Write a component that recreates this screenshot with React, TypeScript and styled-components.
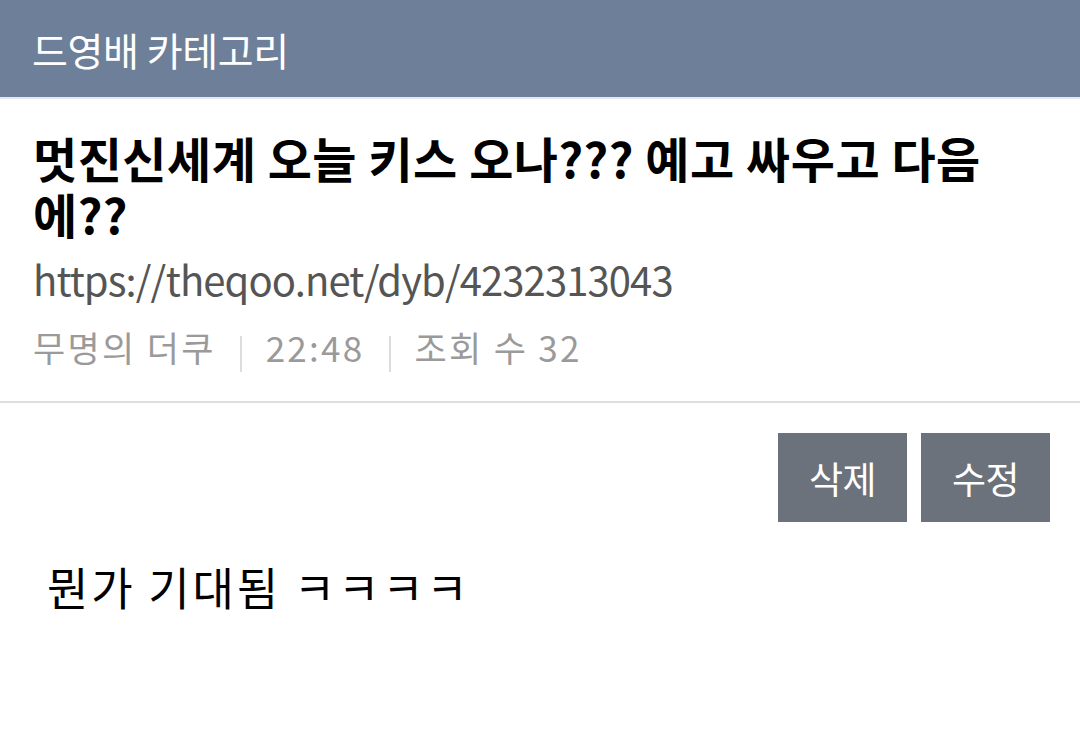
import React from 'react';
import styled, { createGlobalStyle } from 'styled-components';

const GlobalStyle = createGlobalStyle`
  body {
    margin: 0;
    background: #fff;
    font-family: "Noto Sans CJK KR", "Noto Sans", sans-serif;
  }
`;

const Root = styled.div`
  width: 1080px;
  min-height: 732px;
  background: #fff;
`;
const CategoryBar = styled.div`
  height: 97px;
  display: flex;
  align-items: center;
  padding: 0 32px;
  background-color: #6e7f99;
  border-bottom: 2px solid #e4e7ec;
  color: #fff;
  font-size: 39px;
  letter-spacing: -0.4px;
`;
const Header = styled.div`
  padding: 30px 33px 29px;
  border-bottom: 2px solid #dedede;
`;
const Title = styled.h1`
  margin: 0;
  font-size: 48px;
  font-weight: 700;
  line-height: 56px;
  letter-spacing: 0.5px;
  color: #000;
`;
const Url = styled.div`
  margin-top: 13px;
  font-size: 40px;
  line-height: 50px;
  color: #555;
  letter-spacing: -0.9px;
`;
const Meta = styled.div`
  margin-top: 18px;
  display: flex;
  align-items: center;
  font-size: 35px;
  line-height: 48px;
  color: #9a9a9a;
  letter-spacing: 2.3px;
`;
const Divider = styled.span`
  width: 2px;
  height: 36px;
  margin: 14px 24px 0;
  background: #dcdcdc;
`;
const Actions = styled.div`
  display: flex;
  justify-content: flex-end;
  gap: 14px;
  padding: 30px 30px 0;
`;
const ActionButton = styled.button`
  width: 129px;
  height: 89px;
  border: 0;
  border-radius: 0;
  background: #6c727b;
  color: #fff;
  font-family: inherit;
  font-size: 37px;
  letter-spacing: -0.5px;
`;
const Body = styled.div`
  padding: 35px 47px;
  font-size: 45px;
  line-height: 60px;
  letter-spacing: 2.8px;
  color: #000;
`;

export default function App() {
  return (
    <Root>
      <GlobalStyle />
      <CategoryBar>드영배 카테고리</CategoryBar>
      <Header>
        <Title>멋진신세계 오늘 키스 오나??? 예고 싸우고 다음 에??</Title>
        <Url>https://theqoo.net/dyb/4232313043</Url>
        <Meta>
          <span>무명의 더쿠</span>
          <Divider />
          <span>22:48</span>
          <Divider />
          <span>조회 수 32</span>
        </Meta>
      </Header>
      <Actions>
        <ActionButton>삭제</ActionButton>
        <ActionButton>수정</ActionButton>
      </Actions>
      <Body>뭔가 기대됨 ㅋㅋㅋㅋ</Body>
    </Root>
  );
}
